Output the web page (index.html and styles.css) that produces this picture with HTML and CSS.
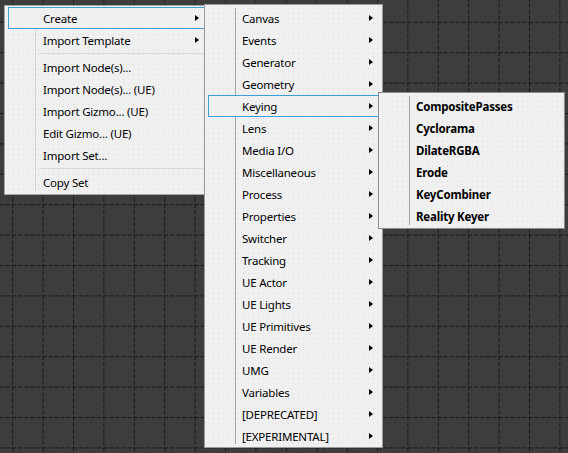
FILE: index.html
```html
<!DOCTYPE html>
<html lang="en">
<head>
    <meta charset="UTF-8">
    <meta name="viewport" content="width=device-width, initial-scale=1.0">
    <title>Node Graph Context Menu</title>
    <link rel="stylesheet" href="styles.css">
</head>
<body>
    <div class="canvas">
        <!-- Dashed grid of the node graph -->
        <svg class="grid" width="568" height="453">
            <defs>
                <pattern id="cell" width="30.4" height="30.4" x="12.2" y="21.8" patternUnits="userSpaceOnUse">
                    <path d="M0.5 0 V30.4 M0 0.5 H30.4" stroke="#161616" stroke-width="1" stroke-dasharray="4 2" fill="none"/>
                </pattern>
            </defs>
            <rect width="568" height="453" fill="url(#cell)"/>
        </svg>

        <!-- Main context menu -->
        <div class="menu menu-main">
            <div class="item active"><span class="label">Create</span><span class="arrow"></span></div>
            <div class="item"><span class="label">Import Template</span><span class="arrow"></span></div>
            <div class="separator"></div>
            <div class="item"><span class="label">Import Node(s)...</span></div>
            <div class="item"><span class="label">Import Node(s)... (UE)</span></div>
            <div class="item"><span class="label">Import Gizmo... (UE)</span></div>
            <div class="item"><span class="label">Edit Gizmo... (UE)</span></div>
            <div class="item"><span class="label">Import Set...</span></div>
            <div class="separator"></div>
            <div class="item"><span class="label">Copy Set</span></div>
        </div>

        <!-- Create submenu -->
        <div class="menu menu-create">
            <div class="item"><span class="label">Canvas</span><span class="arrow"></span></div>
            <div class="item"><span class="label">Events</span><span class="arrow"></span></div>
            <div class="item"><span class="label">Generator</span><span class="arrow"></span></div>
            <div class="item"><span class="label">Geometry</span><span class="arrow"></span></div>
            <div class="item active"><span class="label">Keying</span><span class="arrow"></span></div>
            <div class="item"><span class="label">Lens</span><span class="arrow"></span></div>
            <div class="item"><span class="label">Media I/O</span><span class="arrow"></span></div>
            <div class="item"><span class="label">Miscellaneous</span><span class="arrow"></span></div>
            <div class="item"><span class="label">Process</span><span class="arrow"></span></div>
            <div class="item"><span class="label">Properties</span><span class="arrow"></span></div>
            <div class="item"><span class="label">Switcher</span><span class="arrow"></span></div>
            <div class="item"><span class="label">Tracking</span><span class="arrow"></span></div>
            <div class="item"><span class="label">UE Actor</span><span class="arrow"></span></div>
            <div class="item"><span class="label">UE Lights</span><span class="arrow"></span></div>
            <div class="item"><span class="label">UE Primitives</span><span class="arrow"></span></div>
            <div class="item"><span class="label">UE Render</span><span class="arrow"></span></div>
            <div class="item"><span class="label">UMG</span><span class="arrow"></span></div>
            <div class="item"><span class="label">Variables</span><span class="arrow"></span></div>
            <div class="item"><span class="label">[DEPRECATED]</span><span class="arrow"></span></div>
            <div class="item"><span class="label">[EXPERIMENTAL]</span><span class="arrow"></span></div>
        </div>

        <!-- Keying submenu -->
        <div class="menu menu-keying">
            <div class="item"><span class="label">CompositePasses</span></div>
            <div class="item"><span class="label">Cyclorama</span></div>
            <div class="item"><span class="label">DilateRGBA</span></div>
            <div class="item"><span class="label">Erode</span></div>
            <div class="item"><span class="label">KeyCombiner</span></div>
            <div class="item"><span class="label">Reality Keyer</span></div>
        </div>
    </div>
</body>
</html>
```

FILE: styles.css
```css
body {
    margin: 0;
    padding: 0;
    background-color: #3d3d3d;
    font-family: "Segoe UI", "Noto Sans", sans-serif;
    font-size: 11.5px;
    letter-spacing: -0.2px;
    color: #000;
}
.canvas {
    position: relative;
    width: 568px;
    height: 453px;
    overflow: hidden;
}
.grid {
    position: absolute;
    left: 0;
    top: 0;
}

/* popup menus */
.menu {
    position: absolute;
    box-sizing: border-box;
    display: flex;
    flex-direction: column;
    border: 1px solid #9a9a9a;
    background-color: #f0f0f0;
    background-image:
        linear-gradient(#a3a3a3, #a3a3a3),
        radial-gradient(circle, #dedede 0.7px, transparent 0.9px);
    background-size: 1px calc(100% - 6px), 5px 5px;
    background-position: 30px 3px, 1px 1px;
    background-repeat: no-repeat, repeat;
}
.menu-main {
    left: 4px;
    top: 5px;
    width: 201px;
    padding: 1px 0 1px;
    border-color: #a6a6a6;
    background-image:
        linear-gradient(#d4d4d4, #d4d4d4),
        radial-gradient(circle, #dedede 0.7px, transparent 0.9px);
}
.menu-create {
    left: 204px;
    top: 4px;
    width: 179px;
    padding: 2px 0 0;
}
.menu-keying {
    left: 378px;
    top: 92px;
    width: 187px;
    padding: 2px 0 1px;
    border-color: #8c8c8c;
}

.item {
    display: flex;
    align-items: center;
    box-sizing: border-box;
    height: 22px;
    margin: 0 -1px 0 3px;
    padding: 1px 5px 0 33px;
    border: 1px solid transparent;
    white-space: nowrap;
}
.menu-main .item {
    padding-left: 34px;
}
.menu-create .item {
    padding-right: 9px;
}
.menu-keying .item {
    font-weight: bold;
}
.item.active {
    border-color: #3b9ede;
    background-color: #f0f0f0;
}
.arrow {
    margin-left: auto;
    margin-top: -1px;
    width: 0;
    height: 0;
    border-left: 4px solid #000;
    border-top: 3.5px solid transparent;
    border-bottom: 3.5px solid transparent;
}
.separator {
    height: 1px;
    margin: 2px 0 2px 34px;
    background-color: #d7d7d7;
}
```
